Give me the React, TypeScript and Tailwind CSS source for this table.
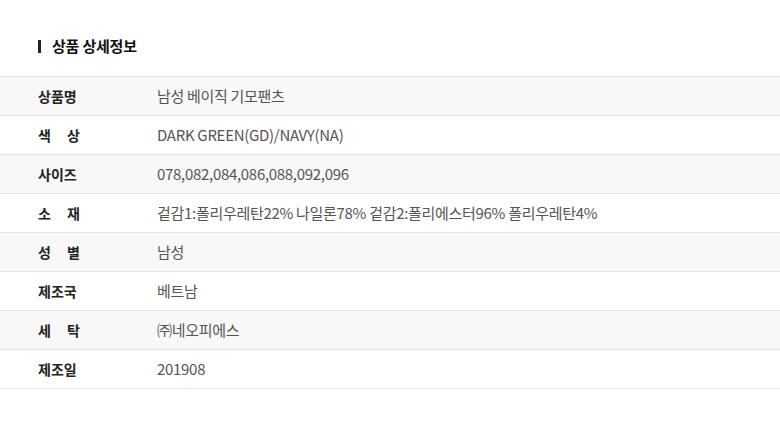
const rows: { label: string[]; value: string }[] = [
  { label: ['상품명'], value: '남성 베이직 기모팬츠' },
  { label: ['색', '상'], value: 'DARK GREEN(GD)/NAVY(NA)' },
  { label: ['사이즈'], value: '078,082,084,086,088,092,096' },
  { label: ['소', '재'], value: '겉감1:폴리우레탄22% 나일론78% 겉감2:폴리에스터96% 폴리우레탄4%' },
  { label: ['성', '별'], value: '남성' },
  { label: ['제조국'], value: '베트남' },
  { label: ['세', '탁'], value: '㈜네오피에스' },
  { label: ['제조일'], value: '201908' },
];

export default function App() {
  return (
    <div className="min-h-[427px] bg-white pt-[35px] font-['Noto_Sans_CJK_KR','Noto_Sans',sans-serif]">
      <div className="mb-[19px] flex h-[22px] items-center pl-[38px]">
        <span className="mr-[11px] h-[13px] w-[3px] bg-[#222]" />
        <h2 className="text-[15px] font-bold tracking-[-0.2px] text-[#111]">상품 상세정보</h2>
      </div>
      <div className="border-t border-[#e3e3e3]">
        {rows.map((row, i) => (
          <div key={i} className={`flex h-[39px] items-center border-b border-[#e3e3e3] ${i % 2 === 0 ? 'bg-[#f8f8f8]' : 'bg-white'}`}>
            <div className="w-[157px] shrink-0 pl-[38px]">
              <div className={`flex w-[42px] text-[14px] font-bold text-[#222] ${row.label.length > 1 ? 'justify-between' : ''}`}>
                {row.label.map((ch) => <span key={ch}>{ch}</span>)}
              </div>
            </div>
            <div className="text-[15px] tracking-[-0.3px] text-[#555]">{row.value}</div>
          </div>
        ))}
      </div>
    </div>
  );
}
